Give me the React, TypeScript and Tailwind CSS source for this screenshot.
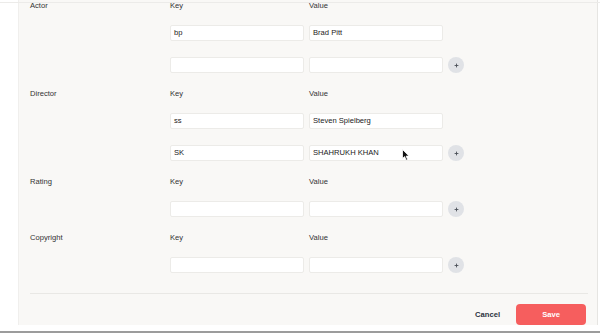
import React from 'react';

type Pair = { k: string; v: string };

const sections: { label: string; rows: Pair[] }[] = [
  { label: 'Actor', rows: [{ k: 'bp', v: 'Brad Pitt' }, { k: '', v: '' }] },
  { label: 'Director', rows: [{ k: 'ss', v: 'Steven Spielberg' }, { k: 'SK', v: 'SHAHRUKH KHAN' }] },
  { label: 'Rating', rows: [{ k: '', v: '' }] },
  { label: 'Copyright', rows: [{ k: '', v: '' }] },
];

const Field: React.FC<{ value: string }> = ({ value }) => (
  <div className="w-[134px] h-[16px] bg-white border border-[#ecebe8] rounded-[2px] pl-[3px] flex items-center text-[7.6px] text-[#222] leading-none">
    {value}
  </div>
);

const AddButton: React.FC = () => (
  <div className="w-[16px] h-[16px] rounded-full bg-[#e0e2e6] flex items-center justify-center">
    <svg width="5" height="5" viewBox="0 0 5 5">
      <path d="M2.5 0.6v3.8M0.6 2.5h3.8" stroke="#4b5058" strokeWidth="0.9" />
    </svg>
  </div>
);

const Section: React.FC<{ label: string; rows: Pair[] }> = ({ label, rows }) => (
  <div className="pb-[15px]">
    <div className="flex h-[12px] items-center text-[7.6px] text-[#333]">
      <div className="w-[140px]">{label}</div>
      <div className="w-[139px]">Key</div>
      <div>Value</div>
    </div>
    <div className="mt-[13px] flex flex-col gap-[16px]">
      {rows.map((r, i) => (
        <div key={i} className="flex items-center">
          <div className="w-[140px]" />
          <Field value={r.k} />
          <div className="w-[5px]" />
          <Field value={r.v} />
          {i === rows.length - 1 && <div className="ml-[5px]"><AddButton /></div>}
        </div>
      ))}
    </div>
  </div>
);

export default function App() {
  return (
    <div
      className="relative w-[600px] h-[334px] flex flex-col bg-white overflow-hidden"
      style={{ fontFamily: '"Liberation Sans", Arial, sans-serif' }}
    >
      <div className="flex flex-1 min-h-0">
        <div className="w-[19px] bg-white border-r border-[#f0efed]" />
        <div className="flex-1 bg-[#f9f8f6] pl-[11px] pr-[9px] flex flex-col">
          {sections.map((s) => (
            <Section key={s.label} label={s.label} rows={s.rows} />
          ))}
          <div className="mt-[5px] h-px bg-[#e9e8e5]" />
          <div className="mt-[10px] flex items-center justify-end pr-[2px]">
            <span className="text-[7.6px] font-bold text-[#2b3340] mr-[16px]">Cancel</span>
            <div className="w-[70px] h-[21px] rounded-[4px] bg-[#f65e5e] flex items-center justify-center text-[7.6px] font-bold text-white">
              Save
            </div>
          </div>
        </div>
        <div className="w-[3px] bg-white border-l border-[#e6e5e2]" />
      </div>
      <div className="h-[2px] bg-[#9c9c9c] mt-[6px]" />
      <div className="h-px bg-white" />

      <div className="absolute left-0 right-0 top-[2px] h-px bg-[#ecebe9]" />

      <svg className="absolute left-[402px] top-[149px]" width="8" height="12" viewBox="0 0 8 12">
        <path d="M0.5 0.5 L0.5 9.5 L2.6 7.6 L4.2 11.2 L5.6 10.6 L4.1 7.1 L7 7.1 Z" fill="#111" stroke="#fff" strokeWidth="0.8" />
      </svg>
    </div>
  );
}
